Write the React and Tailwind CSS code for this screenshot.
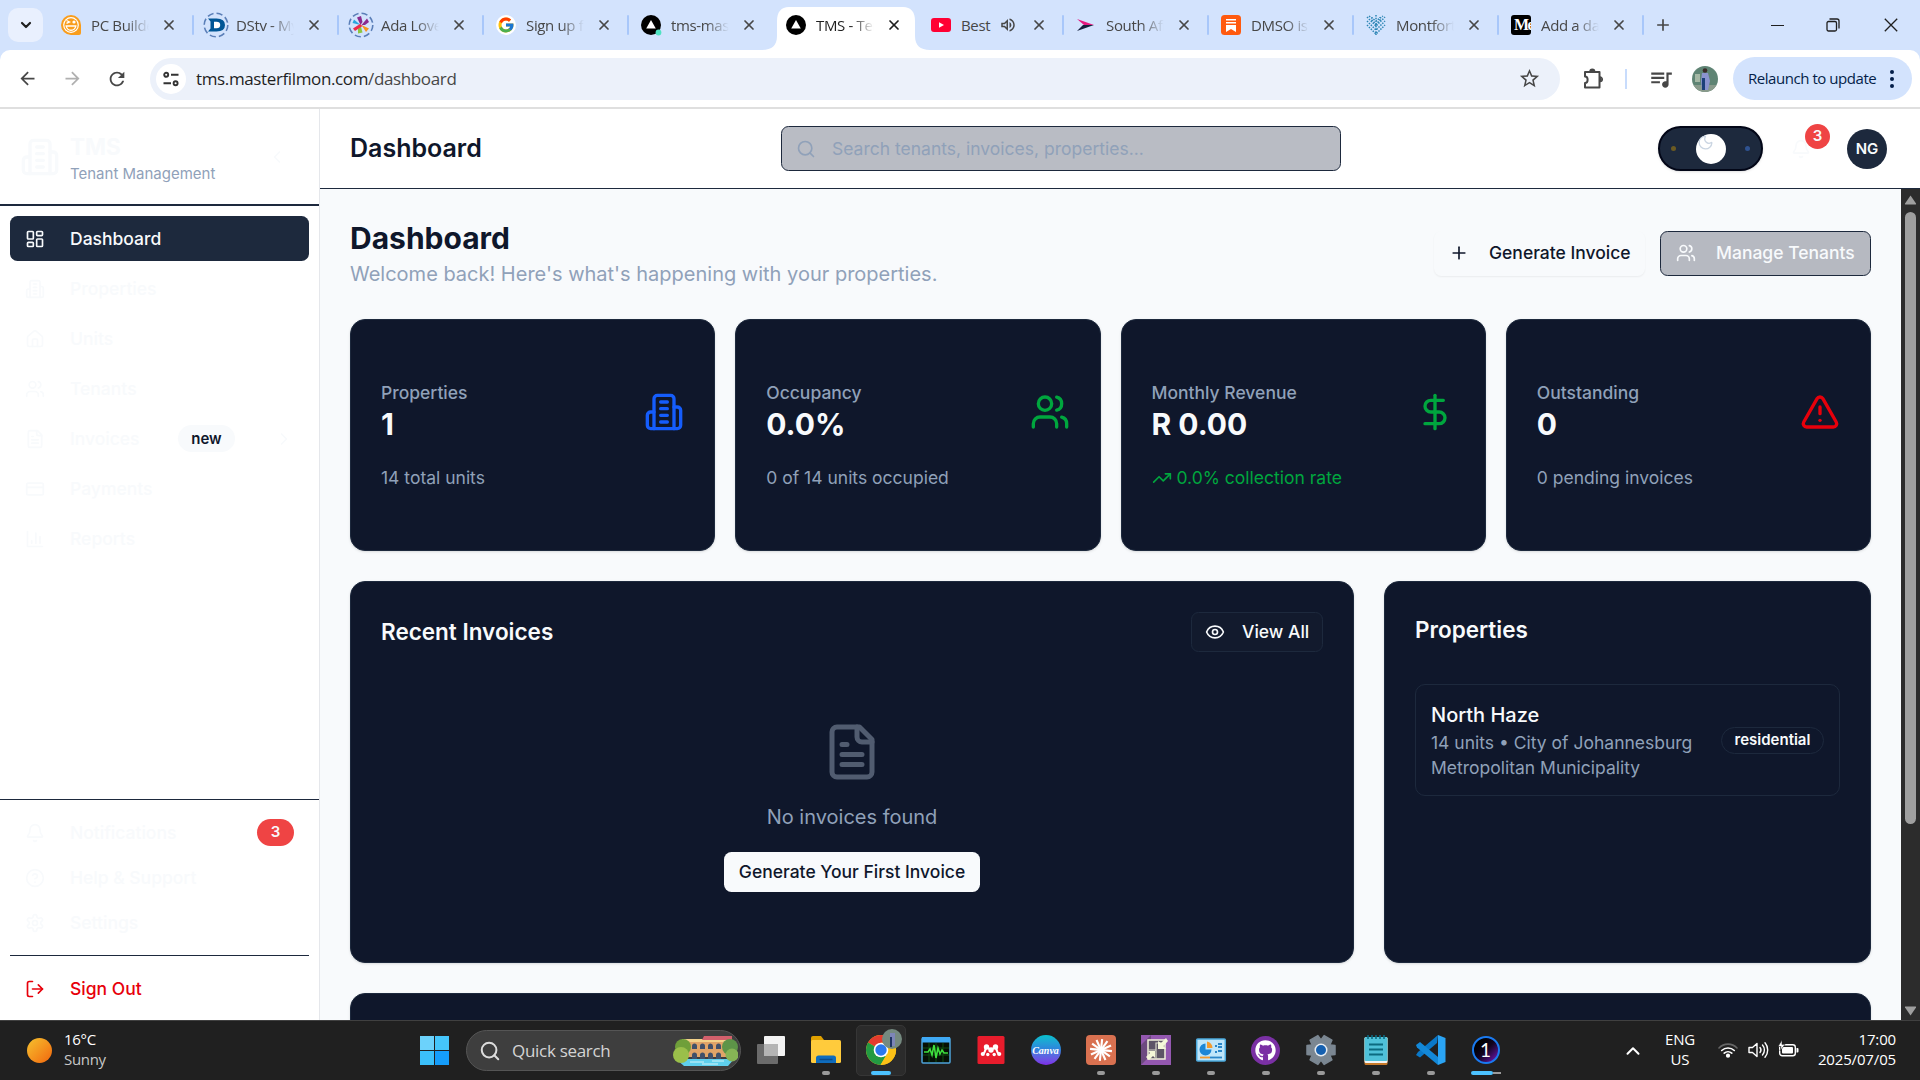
import React from "react";
import {
  LayoutDashboard, House, Users, CreditCard, Bell, CircleQuestionMark, LogOut, ChevronLeft, ChevronRight,
  Search, Plus, DollarSign, TriangleAlert, TrendingUp, Eye, X, Moon, ChevronDown, ChevronUp,
} from "lucide-react";
import { FcGoogle } from "react-icons/fc";
import { FaGithub } from "react-icons/fa";
import { MdArrowBack, MdArrowForward, MdRefresh, MdStarBorder, MdOutlineExtension, MdQueueMusic, MdOutlineVolumeUp, MdAdd } from "react-icons/md";

const UI = "font-['Open_Sans','Noto_Sans',sans-serif]";

function Stroke({ size = 20, className = "", children }) {
  return (
    <svg width={size} height={size} viewBox="0 0 24 24" fill="none" stroke="currentColor" strokeWidth="2" strokeLinecap="round" strokeLinejoin="round" className={"shrink-0 " + className}>
      {children}
    </svg>
  );
}

const Building = (p) => (
  <Stroke {...p}>
    <path d="M6 22V4a2 2 0 0 1 2-2h8a2 2 0 0 1 2 2v18Z" />
    <path d="M6 12H4a2 2 0 0 0-2 2v6a2 2 0 0 0 2 2h2" />
    <path d="M18 9h2a2 2 0 0 1 2 2v9a2 2 0 0 1-2 2h-2" />
    <path d="M10 6h4M10 10h4M10 14h4M10 18h4" />
  </Stroke>
);
const FileText = (p) => (
  <Stroke {...p}>
    <path d="M15 2H6a2 2 0 0 0-2 2v16a2 2 0 0 0 2 2h12a2 2 0 0 0 2-2V7Z" />
    <path d="M14 2v4a2 2 0 0 0 2 2h4" />
    <path d="M10 9H8M16 13H8M16 17H8" />
  </Stroke>
);
const Chart = (p) => (
  <Stroke {...p}>
    <path d="M3 3v18h18M18 17V9M13 17V5M8 17v-3" />
  </Stroke>
);
const Gear = (p) => (
  <Stroke {...p}>
    <path d="M12.22 2h-.44a2 2 0 0 0-2 2v.18a2 2 0 0 1-1 1.73l-.43.25a2 2 0 0 1-2 0l-.15-.08a2 2 0 0 0-2.73.73l-.22.38a2 2 0 0 0 .73 2.73l.15.1a2 2 0 0 1 1 1.72v.51a2 2 0 0 1-1 1.74l-.15.09a2 2 0 0 0-.73 2.73l.22.38a2 2 0 0 0 2.73.73l.15-.08a2 2 0 0 1 2 0l.43.25a2 2 0 0 1 1 1.73V20a2 2 0 0 0 2 2h.44a2 2 0 0 0 2-2v-.18a2 2 0 0 1 1-1.73l.43-.25a2 2 0 0 1 2 0l.15.08a2 2 0 0 0 2.73-.73l.22-.39a2 2 0 0 0-.73-2.73l-.15-.08a2 2 0 0 1-1-1.74v-.5a2 2 0 0 1 1-1.74l.15-.09a2 2 0 0 0 .73-2.73l-.22-.38a2 2 0 0 0-2.73-.73l-.15.08a2 2 0 0 1-2 0l-.43-.25a2 2 0 0 1-1-1.73V4a2 2 0 0 0-2-2z" />
    <circle cx="12" cy="12" r="3" />
  </Stroke>
);

/* ---------- browser favicons ---------- */
const PcBuilder = () => (
  <svg width="20" height="20" viewBox="0 0 20 20">
    <path d="M10 0a10 10 0 1 0 0 20h8a2 2 0 0 0 2-2v-8A10 10 0 0 0 10 0z" fill="#f99d1c" />
    <circle cx="10" cy="10" r="7.9" fill="#fff" />
    <circle cx="10" cy="10" r="6.7" fill="#f99d1c" />
    <path d="M4.400 10.300h11.200a5.600 5.600 0 0 1-11.200 0z" fill="#fff" />
    <path d="M6 11.700h8a4.200 4.200 0 0 1-8 0z" fill="#f99d1c" />
    <path d="M5.500 5.500l3 1.400-3 1.400" stroke="#fff" fill="none" strokeWidth="1.300" />
    <circle cx="13" cy="7" r="1.600" fill="#fff" />
  </svg>
);
const DashedRing = ({ children }) => (
  <svg width="26" height="26" viewBox="0 0 26 26" className="-mx-[3px] shrink-0">
    <circle cx="13" cy="13" r="11.8" fill="none" stroke="#5b7fb8" strokeWidth="1.600" strokeDasharray="6.200 3.100" />
    {children}
  </svg>
);
const Dstv = () => (
  <DashedRing>
    <path d="M5 6.500h8.500q8.500 0 8.500 6.500t-8.500 6.500H5l2.500-3V9.500z" fill="#005696" />
    <path d="M11 9.800h2.500q3.700 0 3.700 3.200t-3.700 3.200H11z" fill="#fff" />
  </DashedRing>
);
const Ada = () => (
  <DashedRing>
    <path d="M12.500 13L9 5.500l4-1.500 1.500 6z" fill="#8a2a8e" />
    <path d="M13.500 13l5.500-6.500 2 3.500-4 3z" fill="#8a2a8e" />
    <path d="M12.500 13l-8-2 1.500-3.500z" fill="#2aa7df" />
    <path d="M12.500 13l2 7.500-4.500 1v-5z" fill="#8cc63f" />
    <path d="M13.500 13l7.500 3.500-3 3.500z" fill="#f7941e" />
    <path d="M5 16.500l7-4.500 2.500 2-7.500 5z" fill="#ee2a4b" />
  </DashedRing>
);
const Vercel = ({ dot }) => (
  <svg width="20" height="20" viewBox="0 0 20 20" className="overflow-visible">
    <circle cx="10" cy="10" r="10" fill="#000" />
    <path d="M10 5l4.800 8.600H5.200z" fill="#fff" />
    {dot && <circle cx="17.500" cy="17.500" r="2.900" fill="#50e3c2" />}
  </svg>
);
const Youtube = () => (
  <svg width="20" height="20" viewBox="0 0 20 20">
    <rect y="3" width="20" height="14" rx="3" fill="#ff0033" />
    <path d="M8 7.200l5 2.800-5 2.800z" fill="#fff" />
  </svg>
);
const SouthAf = () => (
  <svg width="20" height="20" viewBox="0 0 20 20">
    <path d="M1 4l17 6H8z" fill="#e5197f" />
    <path d="M18 10L1 16l6-6z" fill="#14213d" />
  </svg>
);
const Substack = () => (
  <svg width="20" height="20" viewBox="0 0 20 20">
    <rect width="20" height="20" rx="3.500" fill="#ff5a0f" />
    <path d="M5 4h10v1.500H5zM5 7h10v1.500H5zM5 10h10v7l-5-3-5 3z" fill="#fff" />
  </svg>
);
const Montfort = () => (
  <svg width="20" height="20" viewBox="0 0 20 20" stroke="#2d86b5" strokeWidth="1.500" strokeDasharray="1.500 1.200" fill="none">
    <path d="M10 0v20M6 2v3l4 4 4-4V2M1 2l9 9 9-9M1 6l9 9 9-9M1 10l9 9 9-9M3 1l7 5 7-5" />
  </svg>
);
const Medium = () => (
  <div className="h-[20px] w-[20px] overflow-hidden rounded-[3px] bg-black pl-[3px] font-['Liberation_Serif',serif] text-[16px] leading-[20px] font-bold tracking-[-1.500px] text-white">Me</div>
);

const tabs = [
  { t: "PC Builder", icon: <PcBuilder /> },
  { t: "DStv - My", icon: <Dstv /> },
  { t: "Ada Lovelace", icon: <Ada /> },
  { t: "Sign up for", icon: <FcGoogle size={20} className="rounded-full bg-white p-[1px]" /> },
  { t: "tms-master", icon: <Vercel dot /> },
  { t: "TMS - Tenant", icon: <Vercel />, active: true },
  { t: "Best", icon: <Youtube />, audio: true },
  { t: "South Africa", icon: <SouthAf /> },
  { t: "DMSO is a", icon: <Substack /> },
  { t: "Montfort", icon: <Montfort /> },
  { t: "Add a data", icon: <Medium /> },
];

function Tab({ t, icon, active, audio, sep }) {
  return (
    <div className={"relative flex h-[50px] w-[145px] shrink-0 items-center pl-[12px] " + (active ? "text-[#1f1f1f]" : "text-[#474747]")}>
      {active && (
        <svg className="absolute -left-[12px] top-[7px] h-[43px] w-[168px]" viewBox="0 0 168 43">
          <path d="M0 43c10 0 15-5 15-14V14C15 5 19 0 27 0h114c8 0 12 5 12 14v15c0 9 5 14 15 14z" fill="#fff" />
        </svg>
      )}
      <div className="relative flex w-[20px] shrink-0 justify-center">{icon}</div>
      <div className={"relative ml-[10px] shrink-0 overflow-hidden text-[15px] tracking-[-0.350px] whitespace-nowrap " + (audio ? "w-[32px]" : "w-[58px] [mask-image:linear-gradient(90deg,#000_60%,transparent)]")}>{t}</div>
      {audio && <MdOutlineVolumeUp size={18} className="relative ml-[6px] shrink-0" />}
      <X size={16} strokeWidth={2.600} className="absolute left-[112px]" />
      {sep && <div className="absolute right-0 h-[20px] w-[2px] rounded bg-[#a8c7fa]" />}
    </div>
  );
}

function Chrome() {
  return (
    <div className={"shrink-0 " + UI}>
      <div className="flex h-[50px] items-center bg-[#d3e3fd]">
        <div className="ml-[8px] mr-[6px] flex h-[34px] w-[35px] items-center justify-center rounded-[10px] bg-[#e9f0fe] text-[#1f1f1f]">
          <ChevronDown size={16} strokeWidth={3.200} />
        </div>
        {tabs.map((x, i) => (
          <Tab key={i} {...x} sep={i !== 4 && i !== 5} />
        ))}
        <MdAdd size={20} className="ml-[9px] text-[#474747]" />
        <div className="ml-auto flex items-center text-[#1f1f1f]">
          <div className="h-px w-[13px] bg-[#1f1f1f]" />
          <svg width="14" height="14" viewBox="0 0 14 14" fill="none" stroke="#1f1f1f" strokeWidth="1.300" className="ml-[42px]">
            <rect x="1" y="3.500" width="9.500" height="9.500" rx="1.500" />
            <path d="M3.500 1h7.500a2 2 0 0 1 2 2v7.500" />
          </svg>
          <svg width="14" height="14" viewBox="0 0 14 14" stroke="#1f1f1f" strokeWidth="1.300" className="ml-[44px] mr-[22px]">
            <path d="M.8.8l12.400 12.400M13.200.8L.8 13.200" />
          </svg>
        </div>
      </div>
      <div className="bg-[#d3e3fd]">
        <div className="flex h-[57px] items-center rounded-t-[10px] bg-white text-[#474747]">
          <MdArrowBack size={21} className="ml-[17px]" />
          <MdArrowForward size={21} className="ml-[24px] text-[#b0b0b0]" />
          <MdRefresh size={22} className="ml-[23px]" />
          <div className="ml-[22px] flex h-[42px] w-[1410px] items-center rounded-full bg-[#ecf1fa]">
            <div className="ml-[6px] flex h-[30px] w-[30px] items-center justify-center rounded-full bg-white">
              <svg width="16" height="16" viewBox="0 0 16 16" fill="none" stroke="#333" strokeWidth="1.900">
                <circle cx="3.200" cy="3.800" r="2" />
                <path d="M8 3.800h7.500M.5 12.200H8" />
                <circle cx="12.600" cy="12.200" r="2" />
              </svg>
            </div>
            <div className="ml-[10px] text-[17px] tracking-[-0.370px] text-[#1f1f1f]">
              tms.masterfilmon.com<span className="text-[#474747]">/dashboard</span>
            </div>
            <MdStarBorder size={23} className="ml-auto mr-[19px]" />
          </div>
          <svg width="24" height="26" viewBox="0 0 24 26" className="ml-[21px]" fill="none" stroke="#474747" strokeWidth="2" strokeLinejoin="round">
            <path d="M4 6h14.500v15.500H4v-4.500c3.500 0 3.500-6.500 0-6.500z" />
            <path d="M9 6a2.400 2.400 0 0 1 4.800 0zM18.500 11a2.400 2.400 0 0 1 0 4.800z" fill="#474747" stroke="none" />
            <path d="M9 5.500a2.300 2.300 0 0 1 4.600 0M19 11a2.300 2.300 0 0 1 0 4.600" strokeWidth="1.500" />
          </svg>
          <div className="ml-[20px] h-[20px] w-[2px] bg-[#c8dcfc]" />
          <MdQueueMusic size={26} className="ml-[21px]" />
          <svg width="26" height="26" viewBox="0 0 26 26" className="ml-[18px] rounded-full">
            <rect width="26" height="26" fill="#5f8474" />
            <rect y="19" width="26" height="7" fill="#8a9b8c" />
            <rect x="3" y="8" width="5" height="8" fill="#a5b8a5" />
            <path d="M10 7h6l2 8-2 9h-6l-1-9z" fill="#8b93cf" />
            <path d="M10 12h3v12h-3z" fill="#1d3f7a" />
            <circle cx="13" cy="4.500" r="2.300" fill="#3a2a28" />
          </svg>
          <div className="ml-[15px] flex h-[43px] w-[179px] items-center rounded-full bg-[#d3e3fd] pl-[15px] text-[15px] text-[#041e49]">
            <span className="tracking-[-0.450px] whitespace-nowrap">Relaunch to update</span>
            <svg width="4" height="18" viewBox="0 0 4 18" fill="#041e49" className="ml-auto mr-[18px]">
              <circle cx="2" cy="2" r="2" /><circle cx="2" cy="9" r="2" /><circle cx="2" cy="16" r="2" />
            </svg>
          </div>
        </div>
      </div>
      <div className="h-[2px] bg-[#dfdfdf]" />
    </div>
  );
}

/* ---------- application ---------- */
function NavItem({ icon, label, active, children, color = "text-slate-50" }) {
  return (
    <div className={"flex h-[45px] shrink-0 items-center rounded-[7.5px] pl-[15px] pr-[15px] text-[17.5px] font-medium " + (active ? "bg-slate-800 text-slate-50" : color)}>
      {icon}
      <span className="ml-[25px] pt-[2px]">{label}</span>
      {children}
    </div>
  );
}

function Sidebar() {
  return (
    <aside className="flex w-[320px] shrink-0 flex-col border-r border-[#e5e7eb] bg-white">
      <div className="flex h-[97px] shrink-0 items-center border-b-2 border-slate-800 pl-[20px] text-slate-50">
        <Building size={40} />
        <div className="ml-[10px] pt-[5px]">
          <div className="text-[22.5px] leading-[28px] font-bold">TMS</div>
          <div className="text-[15px] leading-[25px] text-slate-400">Tenant Management</div>
        </div>
        <ChevronLeft size={20} className="ml-auto mr-[32px]" />
      </div>
      <nav className="flex flex-1 flex-col gap-[5px] p-[10px]">
        <NavItem active icon={<LayoutDashboard size={20} />} label="Dashboard" />
        <NavItem icon={<Building size={20} />} label="Properties" />
        <NavItem icon={<House size={20} />} label="Units" />
        <NavItem icon={<Users size={20} />} label="Tenants" />
        <NavItem icon={<FileText size={20} />} label="Invoices">
          <span className="ml-auto mr-[39px] flex h-[27px] w-[57px] items-center justify-center rounded-full bg-slate-50 pt-[1px] text-[15px] font-semibold text-slate-900">new</span>
          <ChevronRight size={20} />
        </NavItem>
        <NavItem icon={<CreditCard size={20} />} label="Payments" />
        <NavItem icon={<Chart size={20} />} label="Reports" />
      </nav>
      <div className="flex h-[221px] shrink-0 flex-col border-t border-slate-800 px-[10px] pt-[10px]">
        <NavItem icon={<Bell size={20} />} label="Notifications">
          <span className="ml-auto flex h-[27px] w-[37px] items-center justify-center rounded-full bg-[#ef4444] text-[15px] font-semibold">3</span>
        </NavItem>
        <NavItem icon={<CircleQuestionMark size={20} />} label="Help & Support" />
        <NavItem icon={<Gear size={20} />} label="Settings" />
        <div className="my-[10px] h-px shrink-0 bg-slate-800" />
        <NavItem color="text-[#e7000b]" icon={<LogOut size={20} />} label="Sign Out" />
      </div>
    </aside>
  );
}

function Header() {
  return (
    <header className="flex h-[80px] shrink-0 items-center border-b border-slate-800 bg-white pl-[30px]">
      <h1 className="w-[431px] text-[25px] font-semibold text-slate-900">Dashboard</h1>
      <div className="flex h-[45px] w-[560px] items-center rounded-[7.5px] border border-slate-800 bg-[#b9bcc4] pl-[14px] text-slate-400">
        <Search size={20} />
        <span className="ml-[16px] pt-[1px] text-[17.5px]">Search tenants, invoices, properties...</span>
      </div>
      <div className="ml-[317px] flex h-[45px] w-[105px] items-center justify-between rounded-full border-[2.5px] border-[#020617] bg-slate-800 px-[11px] shadow-sm">
        <span className="h-[5px] w-[5px] rounded-full bg-[#6b5a22]" />
        <span className="h-[30px] w-[30px] rounded-full bg-white pl-[1px]"><Moon size={17} strokeWidth={1.800} className="text-slate-300" /></span>
        <span className="h-[5px] w-[5px] rounded-full bg-[#2f5290]" />
      </div>
      <div className="relative ml-[28px] text-slate-50">
        <Bell size={20} />
        <span className="absolute -top-[15px] left-[14px] flex h-[25px] w-[25px] items-center justify-center rounded-full bg-[#ef4444] text-[15px] font-semibold">3</span>
      </div>
      <div className="ml-[36px] flex h-[40px] w-[40px] items-center justify-center rounded-full bg-slate-800 pt-[1px] text-[15px] font-semibold text-slate-50">NG</div>
    </header>
  );
}

const card = "rounded-[15px] border border-slate-800 bg-slate-900 shadow-sm ";

function Stat({ label, value, note, icon, green }) {
  return (
    <div className={card + "flex h-[232px] flex-col justify-center px-[30px]"}>
      <div className="flex items-center justify-between">
        <div>
          <div className="text-[17.5px] leading-[25px] font-medium text-slate-400">{label}</div>
          <div className="text-[30px] leading-[38px] font-bold text-slate-50">{value}</div>
        </div>
        {icon}
      </div>
      <div className={"mt-[22px] flex items-center text-[17.5px] leading-[25px] " + (green ? "text-[#00a63e]" : "text-slate-400")}>
        {green && <TrendingUp size={20} className="mr-[5px]" />}
        {note}
      </div>
    </div>
  );
}

function Content() {
  return (
    <div className="flex min-h-0 flex-1 overflow-hidden bg-slate-50">
      <main className="h-full w-[1581px] shrink-0 overflow-hidden px-[30px] pt-[29px]">
        <div className="flex h-[70px] items-center">
          <div>
            <h2 className="text-[30px] leading-[40px] font-bold text-slate-900">Dashboard</h2>
            <p className="pt-[1px] text-[20px] leading-[30px] text-slate-400">Welcome back! Here's what's happening with your properties.</p>
          </div>
          <div className="ml-auto flex gap-[15px] text-[17.5px] font-medium">
            <div className="flex h-[45px] w-[211px] items-center rounded-[7.5px] bg-slate-50 pl-[15px] whitespace-nowrap text-slate-900 shadow-[0_1px_2px_rgba(0,0,0,0.06)]">
              <Plus size={20} /><span className="ml-[20px] pt-[1px]">Generate Invoice</span>
            </div>
            <div className="flex h-[45px] w-[211px] items-center rounded-[7.5px] border border-slate-800 bg-[#b6b9c1] pl-[15px] whitespace-nowrap text-slate-50">
              <Users size={20} /><span className="ml-[20px] pt-[1px]">Manage Tenants</span>
            </div>
          </div>
        </div>
        <div className="mt-[31px] grid grid-cols-4 gap-[20px]">
          <Stat label="Properties" value="1" note="14 total units" icon={<Building size={40} className="text-[#155dfc]" />} />
          <Stat label="Occupancy" value="0.0%" note="0 of 14 units occupied" icon={<Users size={40} className="text-[#00a63e]" />} />
          <Stat label="Monthly Revenue" value="R 0.00" note="0.0% collection rate" green icon={<DollarSign size={40} className="text-[#00a63e]" />} />
          <Stat label="Outstanding" value="0" note="0 pending invoices" icon={<TriangleAlert size={40} className="text-[#e7000b]" />} />
        </div>
        <div className="mt-[30px] flex gap-[30px]">
          <section className={card + "flex h-[382px] w-[1004px] flex-col px-[30px] pt-[30px]"}>
            <div className="flex h-[40px] items-center justify-between text-slate-50">
              <h3 className="text-[22.5px] font-semibold">Recent Invoices</h3>
              <div className="flex h-[40px] w-[132px] items-center rounded-[7.5px] border border-slate-800 bg-[#121a2d] pl-[13px] text-[17.5px] font-medium whitespace-nowrap">
                <Eye size={20} /><span className="ml-[17px]">View All</span>
              </div>
            </div>
            <div className="flex flex-col items-center pt-[70px]">
              <FileText size={60} className="text-[#515c70]" />
              <p className="mt-[20px] text-[20px] leading-[30px] text-slate-400">No invoices found</p>
              <div className="mt-[20px] flex h-[40px] w-[256px] items-center justify-center rounded-[7.5px] bg-slate-50 text-[17.5px] font-medium whitespace-nowrap text-slate-900">Generate Your First Invoice</div>
            </div>
          </section>
          <section className={card + "h-[382px] w-[487px] px-[30px] pt-[30px]"}>
            <h3 className="text-[22.5px] leading-[35px] font-semibold text-slate-50">Properties</h3>
            <div className="mt-[37px] flex h-[112px] items-center justify-between rounded-[10px] border border-slate-800 px-[15px]">
              <div className="w-[275px]">
                <div className="text-[20px] leading-[30px] font-medium text-slate-50">North Haze</div>
                <div className="text-[17.5px] leading-[25px] text-slate-400">14 units • City of Johannesburg Metropolitan Municipality</div>
              </div>
              <span className="flex h-[27px] w-[103px] items-center justify-center rounded-full border border-slate-800 text-[15px] font-semibold text-slate-50">residential</span>
            </div>
          </section>
        </div>
        <div className={card + "mt-[30px] h-[200px]"} />
      </main>
      <div className="-mt-px flex w-[19px] flex-col items-center bg-[#2c2c2c]">
        <svg width="13" height="10" viewBox="0 0 13 10" className="mt-[7px]"><path d="M6.500.5L12 8.500q.5 1-.5 1h-10q-1 0-.5-1z" fill="#9f9f9f" /></svg>
        <div className="mt-[7px] h-[612px] w-[11px] rounded-full bg-[#9f9f9f]" />
        <svg width="13" height="10" viewBox="0 0 13 10" className="mt-auto mb-[4px]"><path d="M6.500 9.500L12 1.500q.5-1-.5-1h-10q-1 0-.5 1z" fill="#9f9f9f" /></svg>
      </div>
    </div>
  );
}

/* ---------- taskbar ---------- */
const S = ({ children, size = 30 }) => (
  <svg width={size} height={size} viewBox="0 0 30 30" className="shrink-0 overflow-visible">{children}</svg>
);

const gearTeeth = [0, 60, 120];
const rays = [0, 30, 60, 90, 120, 150];

const apps = [
  { icon: <S><rect x="1" y="9" width="21" height="20" rx="1" fill="#6b6b6b" /><rect x="8" y="1" width="21" height="20" rx="1" fill="#f3f3f3" /><path d="M8 9h14v12H8z" fill="#b4b4b4" /></S> },
  { icon: <S><path d="M0 3a2 2 0 0 1 2-2h8l3 4v6H0z" fill="#e0a100" /><rect y="5" width="30" height="23" rx="1.500" fill="#ffcb3c" /><path d="M5 28v-5a2.500 2.500 0 0 1 2.500-2.500h15A2.500 2.500 0 0 1 25 23v5z" fill="#0f6cbd" /><path d="M8.500 24.500h13" stroke="#0a4a8a" strokeWidth="1.500" /></S>, dot: true },
  {
    box: true,
    icon: (
      <S>
        <circle cx="15" cy="15" r="15" fill="#fbc116" />
        <path d="M15 15L2 7.500A15 15 0 0 1 28 7.500z" fill="#e33b2e" />
        <path d="M2 7.500A15 15 0 0 0 14.500 30L21.500 18.500 15 15z" fill="#229a42" />
        <path d="M15 7.500h13A15 15 0 0 1 14.500 30L21.500 18z" fill="#fbc116" />
        <circle cx="15" cy="15" r="7.300" fill="#fff" />
        <circle cx="15" cy="15" r="5.700" fill="#2a78ee" />
        <circle cx="26" cy="4" r="10" fill="#758a80" />
        <path d="M24-2h5v13h-5z" fill="#7d86b8" />
        <path d="M24 2h2v10h-2z" fill="#1f3564" />
      </S>
    ),
  },
  { icon: <S><rect x="1" y="3" width="28" height="25" rx="1" fill="#061006" stroke="#4da3d9" strokeWidth="1.500" /><rect x="1" y="2" width="28" height="5.500" fill="#3fa9f5" /><path d="M8 8v19M15 8v19M22 8v19M2 13h26M2 20h26" stroke="#0f4d12" /><path d="M3 17h4l2-3 2 6 2-10 2 13 2-10 2 6 2-4 2 3h4" stroke="#3ee03e" strokeWidth="1.600" fill="none" /></S> },
  { icon: <S><rect x="1.500" y="1" width="27" height="28" rx="1.500" fill="#e81c2c" /><g fill="#fff"><circle cx="10.500" cy="12" r="2.700" /><circle cx="19.500" cy="12" r="2.700" /><circle cx="15" cy="15" r="2.700" /><circle cx="6.800" cy="19" r="2.100" /><circle cx="11.800" cy="19.500" r="1.700" /><circle cx="18.200" cy="19.500" r="1.700" /><circle cx="23.200" cy="19" r="2.100" /></g><path d="M7 19c2.500-1 2-5 3.500-7l4.500 3 4.500-3c1.500 2 1 6 3.500 7" stroke="#fff" strokeWidth="2.200" fill="none" /></S> },
  {
    icon: (
      <div className="flex h-[30px] w-[30px] items-center justify-center rounded-full bg-linear-to-b from-[#05c0cc] via-[#2f80dd] to-[#7d2ae8] font-['Liberation_Serif',serif] text-[10px] font-bold text-white italic">Canva</div>
    ),
  },
  { icon: <S><rect width="30" height="30" rx="4" fill="#d97150" />{rays.map((r) => <path key={r} d="M15 4v22" stroke="#fff" strokeWidth="2.100" transform={`rotate(${r + 6} 15 15)`} />)}</S>, dot: true },
  { icon: <S><rect width="30" height="30" fill="#9458b0" /><path d="M0 30V10L10 0v20z" fill="#6d4a80" /><path d="M7 5h17v19H7z" fill="#5d5566" stroke="#f2f4dc" strokeWidth="1.500" /><path d="M15 15V8h9M15 15h-8M15 15v9" stroke="#d7d9c8" strokeWidth="1.200" fill="none" /><path d="M25 3l-5 5-3-2v8h8l-2.500-3L27 6zM5 22l4-4-2-2h7v7l-2-2-4 4z" fill="#f4f7d8" /></S>, dot: true },
  { icon: <S><rect x=".7" y="4" width="28.600" height="22" rx="1" fill="#bfe6fa" stroke="#4aa9dd" strokeWidth="1.500" /><path d="M9.500 14.500V8.500a6 6 0 1 0 6 6z" fill="#1d87d6" /><path d="M11 13V6.500a6.500 6.500 0 0 1 5.500 6.500z" fill="#f29a2e" /><path d="M19 11h2M22 9h4M22 12h4M19 17h2M22 16h4" stroke="#2a86c8" strokeWidth="1.800" /><path d="M4 22.500h10" stroke="#f29a2e" strokeWidth="1.800" /><path d="M14 22.500h12" stroke="#2a86c8" strokeWidth="1.800" /></S>, dot: true },
  {
    icon: (
      <div className="flex h-[29px] w-[29px] items-center justify-center rounded-full bg-[#7a30a4]"><FaGithub size={21} color="#fff" /></div>
    ),
    dot: true,
  },
  { icon: <S>{gearTeeth.map((r) => <path key={r} d="M10.500 1h9l1.500 14-1.500 14h-9L9 15z" fill="#7b8792" stroke="#7b8792" strokeWidth="1.500" strokeLinejoin="round" transform={`rotate(${r + 30} 15 15)`} />)}<circle cx="15" cy="15" r="10.500" fill="#7b8792" /><circle cx="15" cy="15" r="6.500" fill="#e8edf2" /><circle cx="15" cy="15" r="5" fill="#1560b0" /></S>, dot: true },
  { icon: <S><rect x="3.500" y="2" width="23" height="28" rx="1.500" fill="#c87a2a" /><rect x="3.500" y="2" width="23" height="26" rx="1.500" fill="#f0f4f5" /><rect x="3.500" y="2" width="23" height="24" rx="1.500" fill="#4fc1d9" /><path d="M8 9.500h14M8 14.500h14M8 19.500h14" stroke="#0c6a80" strokeWidth="1.800" /><path d="M7 0v4M11 0v4M15 0v4M19 0v4M23 0v4" stroke="#0c6a80" strokeWidth="1.600" /></S>, dot: true },
  { icon: <S><path d="M22 0l-1 8L4 22.500 0 20l2-3z" fill="#0a78c8" /><path d="M0 10l4-3 18 15v8L1 12.500z" fill="#1388d8" /><path d="M22 0l7.500 3v24L22 30z" fill="#2aa4f4" /></S>, dot: true },
  {
    split: true,
    icon: (
      <div className="flex h-[28px] w-[28px] items-center justify-center rounded-full border-[2.5px] border-[#1a7af0] bg-linear-to-br from-black via-[#12041f] to-[#7d14c8] font-['Lato',sans-serif] text-[19px] text-white">1</div>
    ),
  },
];

function Taskbar() {
  return (
    <div className={"flex h-[60px] shrink-0 items-center border-t border-[#404040] bg-[#202020] text-[15.5px] text-white " + UI}>
      <div className="ml-[27px] h-[25px] w-[25px] rounded-full bg-linear-to-br from-[#f3c12e] to-[#f0640c]" />
      <div className="ml-[12px] w-[356px] pb-[3px] text-[15px] leading-[20px] tracking-[-0.300px]">
        <div>16°C</div>
        <div className="text-[#c8c8c8]">Sunny</div>
      </div>
      <div className="grid h-[29px] w-[29px] grid-cols-2 gap-[1.5px]">
        <div className="bg-[#6cd2fb]" /><div className="bg-[#45c6fb]" /><div className="bg-[#3bc0fa]" /><div className="bg-[#159dfa]" />
      </div>
      <div className="ml-[17px] flex h-[41px] w-[275px] items-center rounded-full border border-[#555] bg-[#3e3e3e] pl-[12px]">
        <Search size={22} strokeWidth={2.200} className="text-[#dcdcdc]" />
        <span className="ml-[11px] text-[17px] tracking-[-0.300px] text-[#d4d4d4]">Quick search</span>
        <svg width="66" height="32" viewBox="0 0 66 32" className="ml-auto mr-[2px]">
          <path d="M4 24h58l-6 7H12z" fill="#5fd0ee" />
          <path d="M10 7h50v15H10z" fill="#e0a468" />
          <path d="M10 4h50v3H10z" fill="#f3d28a" />
          <path d="M32 1h28v4H30z" fill="#d2606c" />
          {[20, 28, 36, 44].map((x) => <path key={x} d={`M${x} 14v-3a2.500 2.500 0 0 1 5 0v3zM${x} 24v-4a2.500 2.500 0 0 1 5 0v4z`} fill="#40506a" />)}
          <circle cx="11" cy="12" r="8" fill="#6f9f3a" />
          <circle cx="9" cy="20" r="8" fill="#9abf4a" />
          <circle cx="58" cy="12" r="8" fill="#5d9448" />
          <circle cx="60" cy="20" r="6.500" fill="#86b455" />
          <path d="M18 27h14M30 29h16M40 26h12" stroke="#d4f5fb" />
        </svg>
      </div>
      <div className="ml-[2px] flex">
        {apps.map((a, i) => (
          <div key={i} className="flex h-[59px] w-[55px] items-center justify-center pb-px">
            <div className={"relative flex h-[51px] w-[50px] items-center justify-center rounded-[5px] " + (a.box ? "border border-[#363636] bg-[#2b2b2b]" : "")}>
              {a.icon}
              {a.dot && <div className="absolute bottom-[1px] h-[4px] w-[8px] rounded-full bg-[#9a9a9a]" />}
              {a.box && <div className="absolute bottom-0 h-[4px] w-[20px] rounded-full bg-[#4cc2ff]" />}
              {a.split && (
                <div className="absolute bottom-[1px] flex w-[30px] items-center">
                  <div className="h-[4px] w-[22px] rounded-full bg-[#4cc2ff]" />
                  <div className="h-[2px] flex-1 bg-[#9a9a9a]" />
                </div>
              )}
            </div>
          </div>
        ))}
      </div>
      <ChevronUp size={22} strokeWidth={2.200} className="ml-auto" />
      <div className="ml-[20px] w-[32px] pb-[3px] text-center text-[15px] leading-[20px] tracking-[-0.200px]"><div>ENG</div><div>US</div></div>
      <svg width="20" height="16" viewBox="0 0 20 16" fill="none" stroke="#fff" strokeWidth="1.600" strokeLinecap="round" className="-mt-[2px] ml-[22px]">
        <path d="M1 6a12.500 12.500 0 0 1 18 0" stroke="#666" />
        <path d="M3.700 8.500a9 9 0 0 1 12.600 0M6.200 11.200a5.500 5.500 0 0 1 7.600 0" />
        <circle cx="10" cy="13.700" r="1.300" fill="#fff" />
      </svg>
      <svg width="21" height="18" viewBox="0 0 21 18" fill="none" stroke="#fff" strokeWidth="1.400" strokeLinecap="round" strokeLinejoin="round" className="-mt-[1px] ml-[10px]">
        <path d="M1 6.500h3.500L9 2.500v13l-4.500-4H1z" />
        <path d="M12 6.500a4 4 0 0 1 0 5M14.500 4a7.500 7.500 0 0 1 0 10M17 1.800a11 11 0 0 1 0 14.400" />
      </svg>
      <svg width="21" height="18" viewBox="0 0 21 18" className="-mt-[4px] ml-[9px]">
        <rect x="1.700" y="4.700" width="15.600" height="11" rx="2.500" fill="none" stroke="#fff" strokeWidth="1.400" />
        <rect x="4" y="7" width="11" height="6.500" rx="1" fill="#fff" />
        <path d="M18.500 8v4.500h1a1 1 0 0 0 1-1V9a1 1 0 0 0-1-1z" fill="#fff" />
        <path d="M4 0L0 6.500h3L2 11l5-6.500H4z" fill="#fff" stroke="#202020" strokeWidth=".6" />
      </svg>
      <div className="ml-[15px] mr-[24px] w-[82px] pb-[3px] text-right text-[15px] leading-[20px] tracking-[-0.150px] whitespace-nowrap"><div>17:00</div><div>2025/07/05</div></div>
    </div>
  );
}

export default function App() {
  return (
    <div className="flex h-[1080px] w-[1920px] flex-col overflow-hidden bg-white font-['Inter',sans-serif]">
      <Chrome />
      <div className="flex min-h-0 flex-1">
        <Sidebar />
        <div className="flex min-w-0 flex-1 flex-col">
          <Header />
          <Content />
        </div>
      </div>
      <Taskbar />
    </div>
  );
}
